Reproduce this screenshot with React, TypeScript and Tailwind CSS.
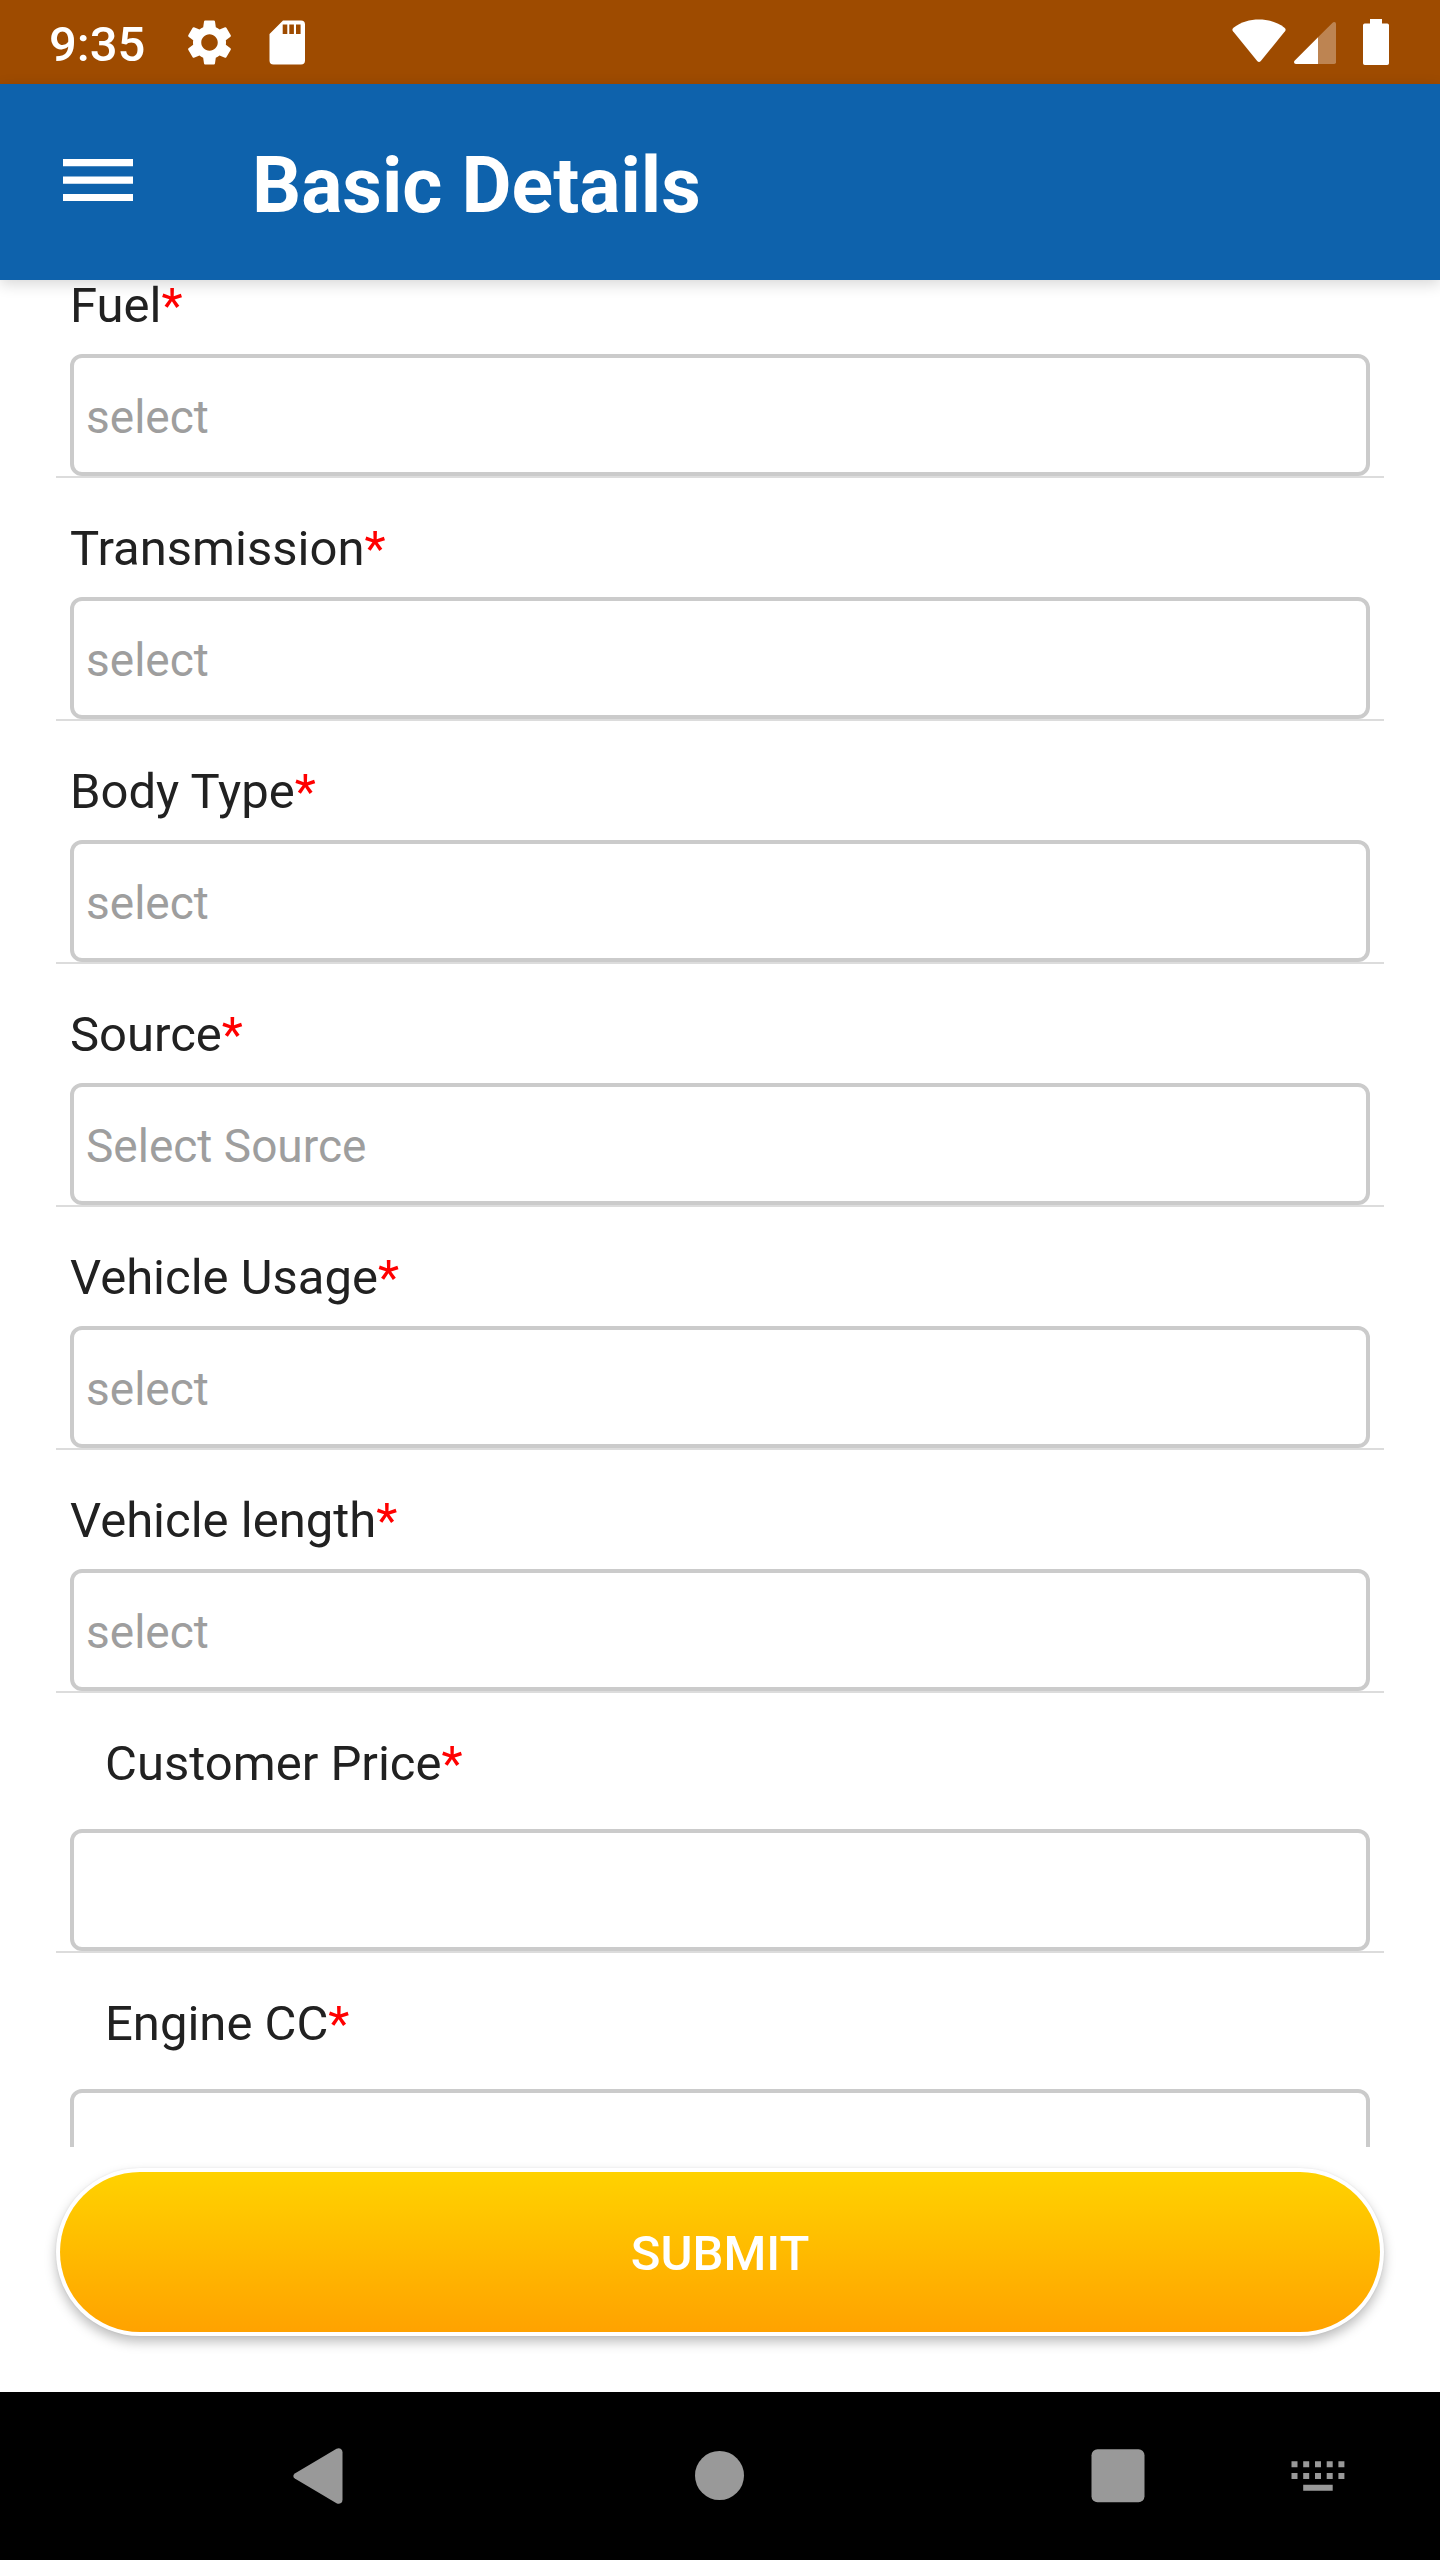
import { MdSettings } from "react-icons/md";

type FieldProps = {
  id: string;
  label: string;
  placeholder?: string;
  inset?: boolean;
};

const fields: FieldProps[] = [
  { id: "fuel", label: "Fuel", placeholder: "select" },
  { id: "transmission", label: "Transmission", placeholder: "select" },
  { id: "body-type", label: "Body Type", placeholder: "select" },
  { id: "source", label: "Source", placeholder: "Select Source" },
  { id: "vehicle-usage", label: "Vehicle Usage", placeholder: "select" },
  { id: "vehicle-length", label: "Vehicle length", placeholder: "select" },
  { id: "customer-price", label: "Customer Price", inset: true },
  { id: "engine-cc", label: "Engine CC", inset: true },
];

function StatusBar() {
  return (
    <div className="flex h-[84px] shrink-0 items-center justify-between bg-[#9e4b00] pl-[49px] pr-[51px] text-white">
      <div className="flex items-center">
        <time className="pt-1 text-[49px] font-medium leading-[57px]">9:35</time>
        <MdSettings className="ml-[37px] size-[55px]" aria-hidden="true" />
        <svg className="ml-8 h-[45px] w-9" viewBox="0 0 36 45" aria-hidden="true">
          <path
            fill="currentColor"
            fillRule="evenodd"
            d="M14 .5H32a4 4 0 0 1 4 4V40.500a4 4 0 0 1-4 4H4.500a4 4 0 0 1-4-4V14zM13.700 4.500V14h4.600V4.500zM20.300 4.500V14h4.600V4.500zM27 4.500V14h4.600V4.500z"
          />
        </svg>
      </div>
      <div className="flex items-center">
        <svg className="h-[46px] w-[54px]" viewBox="0 0 54 46" aria-hidden="true">
          <path
            fill="currentColor"
            d="M1 12.300Q-.5 10.300 1.500 8.700C9 3 18 .5 27 .5S45 3 52.500 8.700Q54.500 10.300 53 12.300L28.800 42Q27 44 25.200 42z"
          />
        </svg>
        <svg className="ml-2 h-[46px] w-[42px]" viewBox="0 0 42 46" aria-hidden="true">
          <path
            fill="currentColor"
            fillOpacity="0.32"
            d="M24 18.300 38.300 3.900Q39.300 3 40.300 3 42 3 42 4.800V43.200Q42 45 40.200 45H24z"
          />
          <path fill="currentColor" d="M24 18.300V45H2Q0 45 0 43.200 0 42.300 .8 41.500z" />
        </svg>
        <svg className="ml-[27px] h-[46px] w-[26px]" viewBox="0 0 26 46" aria-hidden="true">
          <path
            fill="currentColor"
            d="M7 0H19V4.500H24.200Q26 4.500 26 6.300V44.200Q26 46 24.200 46H1.800Q0 46 0 44.200V6.300Q0 4.500 1.800 4.500H7z"
          />
        </svg>
      </div>
    </div>
  );
}

function AppBar() {
  return (
    <header className="relative z-10 flex h-[196px] shrink-0 items-center bg-[#0e62ac] px-[63px] text-white shadow-[0_4px_14px_rgba(0,0,0,0.16)]">
      <button type="button" aria-label="Open menu" className="pb-1">
        <svg className="h-[42px] w-[70px]" viewBox="0 0 70 42" aria-hidden="true">
          <path fill="currentColor" d="M0 0H70V7.200H0zM0 17.500H70V24.700H0zM0 35H70V42.200H0z" />
        </svg>
      </button>
      <h1 className="ml-[119px] pt-2 text-[77px] font-bold leading-[90px]">Basic Details</h1>
    </header>
  );
}

function Field({ id, label, placeholder, inset }: FieldProps) {
  return (
    <div className="border-b-2 border-[#dcdcdc] px-3.5 pt-[42px]">
      <label
        htmlFor={id}
        className={
          inset
            ? "mb-[37px] block pl-[35px] text-[49px] leading-[57px] text-[#212121]"
            : "mb-5 block text-[49px] leading-[57px] text-[#212121]"
        }
      >
        {label}
        <span className="text-[#ff0000]">*</span>
      </label>
      <input
        id={id}
        type="text"
        required
        placeholder={placeholder}
        className="block h-[122px] w-full rounded-xl border-4 border-[#cbcbcb] bg-white px-3 pt-1 text-[46px] text-[#212121] outline-none placeholder:text-[#9e9e9e]"
      />
    </div>
  );
}

function NavigationBar() {
  return (
    <nav
      aria-label="System navigation"
      className="grid h-[168px] shrink-0 grid-cols-[218fr_200fr_202fr_200fr_198fr_200fr_200fr_22fr] bg-black text-[#999999]"
    >
      <button type="button" aria-label="Back" className="col-start-2 flex items-center justify-center">
        <svg className="h-14 w-[50px]" viewBox="0 0 50 56" aria-hidden="true">
          <path
            fill="currentColor"
            d="M1.800 25.500 43.500.7Q46 -.5 48 .9 49.500 2 49.500 4.500V51.500Q49.500 54 48 55.100 46 56.500 43.500 55.300L1.800 30.500Q.3 29.500 .3 28T1.800 25.500z"
          />
        </svg>
      </button>
      <button type="button" aria-label="Home" className="col-start-4 flex items-center justify-center">
        <svg className="size-[50px]" viewBox="0 0 50 50" aria-hidden="true">
          <circle cx="24.500" cy="24.500" r="24.500" fill="currentColor" />
        </svg>
      </button>
      <button type="button" aria-label="Recent apps" className="col-start-6 flex items-center justify-center">
        <svg className="size-[54px]" viewBox="0 0 54 54" aria-hidden="true">
          <rect x=".5" y=".2" width="53" height="53" rx="6" fill="currentColor" />
        </svg>
      </button>
      <button type="button" aria-label="Switch keyboard" className="col-start-7 flex items-center justify-center">
        <svg className="h-[30px] w-[54px]" viewBox="0 0 54 30" aria-hidden="true">
          <path
            fill="currentColor"
            d="M.5 .3h6v6h-6zM12.200 .3h6v6h-6zM24 .3h6v6h-6zM35.700 .3h6v6h-6zM47.400 .3h6v6h-6zM.5 12h6v6h-6zM12.200 12h6v6h-6zM24 12h6v6h-6zM35.700 12h6v6h-6zM47.400 12h6v6h-6zM12.200 23.800h29.500v6h-29.500z"
          />
        </svg>
      </button>
    </nav>
  );
}

export default function App() {
  return (
    <div className="flex h-screen flex-col bg-white font-[Roboto,sans-serif]">
      <StatusBar />
      <AppBar />
      <main className="flex min-h-0 flex-1 flex-col">
        {/* The list begins beneath the app bar, which covers the top of its first row. */}
        <form id="basic-details" className="-mt-[45px] min-h-0 flex-1 overflow-hidden px-14">
          {fields.map((field) => (
            <Field key={field.id} {...field} />
          ))}
        </form>
        <div className="px-14 pb-14 pt-[21px]">
          <button
            type="submit"
            form="basic-details"
            className="block h-[168px] w-full rounded-full bg-white p-1 text-[49px] font-medium text-white shadow-[0_6px_12px_rgba(0,0,0,0.26),0_0_2px_rgba(0,0,0,0.08)]"
          >
            <span className="flex h-full items-center justify-center rounded-full bg-linear-to-b from-[#ffd200] to-[#ffa200] pt-1">
              SUBMIT
            </span>
          </button>
        </div>
      </main>
      <NavigationBar />
    </div>
  );
}
